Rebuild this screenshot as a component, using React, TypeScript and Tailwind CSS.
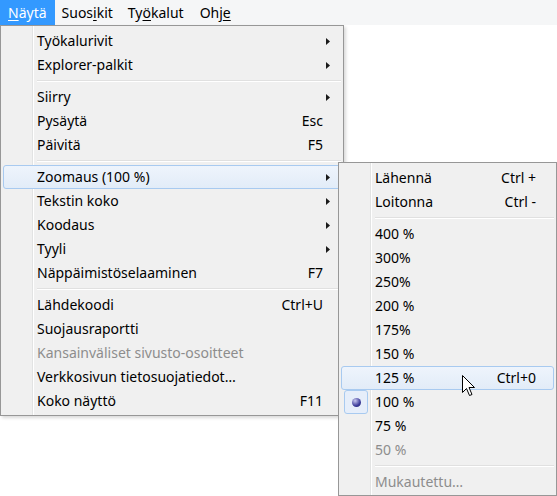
import type { ReactNode } from 'react';

type Item =
  | { sep: true }
  | { label: ReactNode; key?: string; arrow?: boolean; disabled?: boolean; hot?: boolean; radio?: boolean; sep?: false };

const MAIN: Item[] = [
  { label: 'Työkalurivit', arrow: true },
  { label: 'Explorer-palkit', arrow: true },
  { sep: true },
  { label: 'Siirry', arrow: true },
  { label: 'Pysäytä', key: 'Esc' },
  { label: 'Päivitä', key: 'F5' },
  { sep: true },
  { label: 'Zoomaus (100 %)', arrow: true, hot: true },
  { label: 'Tekstin koko', arrow: true },
  { label: 'Koodaus', arrow: true },
  { label: 'Tyyli', arrow: true },
  { label: 'Näppäimistöselaaminen', key: 'F7' },
  { sep: true },
  { label: 'Lähdekoodi', key: 'Ctrl+U' },
  { label: 'Suojausraportti' },
  { label: 'Kansainväliset sivusto-osoitteet', disabled: true },
  { label: 'Verkkosivun tietosuojatiedot…' },
  { label: 'Koko näyttö', key: 'F11' },
];

const ZOOM: Item[] = [
  { label: 'Lähennä', key: 'Ctrl +' },
  { label: 'Loitonna', key: 'Ctrl -' },
  { sep: true },
  { label: '400 %' },
  { label: '300%' },
  { label: '250%' },
  { label: '200 %' },
  { label: '175%' },
  { label: '150 %' },
  { label: '125 %', key: 'Ctrl+0', hot: true },
  { label: '100 %', radio: true },
  { label: '75 %' },
  { label: '50 %', disabled: true },
  { sep: true },
  { label: 'Mukautettu…', disabled: true },
];

function Arrow() {
  return (
    <svg width="4" height="7" viewBox="0 0 4 7" className="shrink-0">
      <path d="M0 0 L4 3.5 L0 7 Z" fill="#1a1a1a" />
    </svg>
  );
}

function MenuRows({ items, gutter, keyRight }: { items: Item[]; gutter: number; keyRight: number }) {
  return (
    <>
      {items.map((it, i) => {
        if (it.sep) {
          return (
            <div key={i} className="flex h-[8px] items-center" style={{ paddingLeft: gutter + 3 }}>
              <div className="mr-[2px] flex-1 border-t border-b border-t-[#e0e0e0] border-b-white" />
            </div>
          );
        }
        return (
          <div
            key={i}
            className={`relative mx-[2px] flex h-[24px] items-center rounded-[3px] border ${
              it.hot ? 'border-[#a8caf0] bg-gradient-to-b from-[#eef4fc] to-[#e2ecf8]' : 'border-transparent'
            } ${it.disabled ? 'text-[#8d8d8d]' : 'text-black'}`}
          >
            <div className="flex shrink-0 items-center justify-center" style={{ width: gutter - 3 }}>
              {it.radio && (
                <div className="flex h-[24px] w-[24px] -translate-x-[1px] items-center justify-center rounded-[3px] border border-[#a8caf0] bg-[#e6eefa]">
                  <span className="block h-[9px] w-[9px] rounded-full bg-[radial-gradient(circle_at_35%_30%,#c8c8f0,#3c3c9a_60%,#202070)]" />
                </div>
              )}
            </div>
            <span className="flex-1 whitespace-nowrap pl-[3px]">{it.label}</span>
            {it.key && <span className="whitespace-nowrap" style={{ marginRight: keyRight }}>{it.key}</span>}
            {it.arrow && (
              <span className="mr-[10px] flex">
                <Arrow />
              </span>
            )}
          </div>
        );
      })}
    </>
  );
}

function U({ children }: { children: ReactNode }) {
  return <span className="underline underline-offset-[2px]">{children}</span>;
}

export default function App() {
  return (
    <div
      className="relative h-[496px] w-[557px] overflow-hidden bg-white text-[14px] leading-none"
      style={{ fontFamily: '"Segoe UI", "Noto Sans", "Open Sans", sans-serif' }}
    >
      {/* menu bar */}
      <div className="flex h-[25px] items-stretch bg-[#f5f6f7]">
        <div className="flex items-center bg-[#3399ff] px-[8px] text-white">
          <U>N</U>äytä
        </div>
        <div className="flex items-center px-[7px] text-black">
          Suos<U>i</U>kit
        </div>
        <div className="flex items-center px-[8px] text-black">
          Ty<U>ö</U>kalut
        </div>
        <div className="flex items-center px-[8px] text-black">
          Ohj<U>e</U>
        </div>
      </div>

      {/* main dropdown */}
      <div className="absolute left-0 top-[25px] w-[344px] border border-[#979797] bg-[#f0f0f0] pb-[2px] pt-[3px] shadow-[2px_2px_3px_rgba(0,0,0,0.15)]">
        <div className="absolute bottom-0 left-[31px] top-0 w-[2px] border-l border-r border-l-[#e2e3e3] border-r-white" />
        <MenuRows items={MAIN} gutter={33} keyRight={17} />
      </div>

      {/* zoom submenu */}
      <div className="absolute left-[338px] top-[162px] w-[219px] border border-[#979797] bg-[#f0f0f0] pb-[1px] pt-[3px]">
        <div className="absolute bottom-0 left-[31px] top-0 w-[2px] border-l border-r border-l-[#e2e3e3] border-r-white" />
        <MenuRows items={ZOOM} gutter={33} keyRight={17} />
      </div>

      {/* mouse pointer */}
      <svg className="absolute left-[462px] top-[375px]" width="14" height="24" viewBox="0 0 14 24">
        <path
          d="M0.5 0.5 L0.5 17.5 L4.5 13.5 L7.5 20.5 L10 19.5 L7 12.5 L12.5 12.5 Z"
          fill="white"
          stroke="black"
          strokeWidth="1"
          strokeLinejoin="miter"
        />
      </svg>
    </div>
  );
}
